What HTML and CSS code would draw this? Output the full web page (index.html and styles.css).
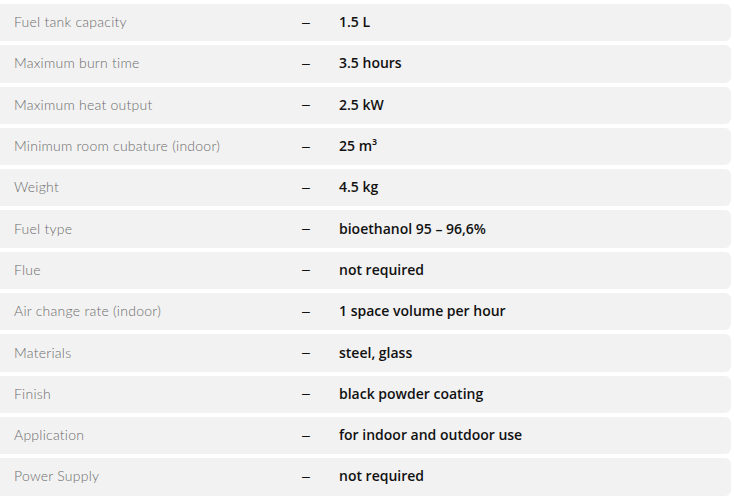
FILE: index.html
```html
<!DOCTYPE html>
<html>
<head>
<meta charset="utf-8">
<link rel="stylesheet" href="styles.css">
</head>
<body>
<div class="specs">
  <div class="row"><span class="label">Fuel tank capacity</span><span class="dash">–</span><span class="value">1.5 L</span></div>
  <div class="row"><span class="label">Maximum burn time</span><span class="dash">–</span><span class="value">3.5 hours</span></div>
  <div class="row"><span class="label">Maximum heat output</span><span class="dash">–</span><span class="value">2.5 kW</span></div>
  <div class="row"><span class="label">Minimum room cubature (indoor)</span><span class="dash">–</span><span class="value">25 m³</span></div>
  <div class="row"><span class="label">Weight</span><span class="dash">–</span><span class="value">4.5 kg</span></div>
  <div class="row"><span class="label">Fuel type</span><span class="dash">–</span><span class="value">bioethanol 95 – 96,6%</span></div>
  <div class="row"><span class="label">Flue</span><span class="dash">–</span><span class="value">not required</span></div>
  <div class="row"><span class="label">Air change rate (indoor)</span><span class="dash">–</span><span class="value">1 space volume per hour</span></div>
  <div class="row"><span class="label">Materials</span><span class="dash">–</span><span class="value">steel, glass</span></div>
  <div class="row"><span class="label">Finish</span><span class="dash">–</span><span class="value">black powder coating</span></div>
  <div class="row"><span class="label">Application</span><span class="dash">–</span><span class="value">for indoor and outdoor use</span></div>
  <div class="row"><span class="label">Power Supply</span><span class="dash">–</span><span class="value">not required</span></div>
</div>
</body>
</html>
```
FILE: styles.css
```css
html, body {
  margin: 0;
  padding: 0;
  background: #ffffff;
}
.specs {
  display: flex;
  flex-direction: column;
  gap: 4px;
  padding-top: 4px;
  width: 731px;
}
.row {
  display: grid;
  grid-template-columns: 302px 37px 1fr;
  align-items: center;
  box-sizing: border-box;
  height: 37.3px;
  padding-bottom: 2px;
  background: #f2f2f2;
  border-radius: 0 6px 6px 0;
}
.label {
  padding-left: 14px;
  font-family: Lato, "Noto Sans", sans-serif;
  font-weight: 300;
  font-size: 14px;
  color: #6c6c6c;
  letter-spacing: 0.25px;
}
.dash {
  font-family: "Liberation Sans", sans-serif;
  font-size: 14px;
  color: #111;
}
.value {
  font-family: "Open Sans", sans-serif;
  font-weight: 600;
  font-size: 14px;
  color: #111;
}
```
